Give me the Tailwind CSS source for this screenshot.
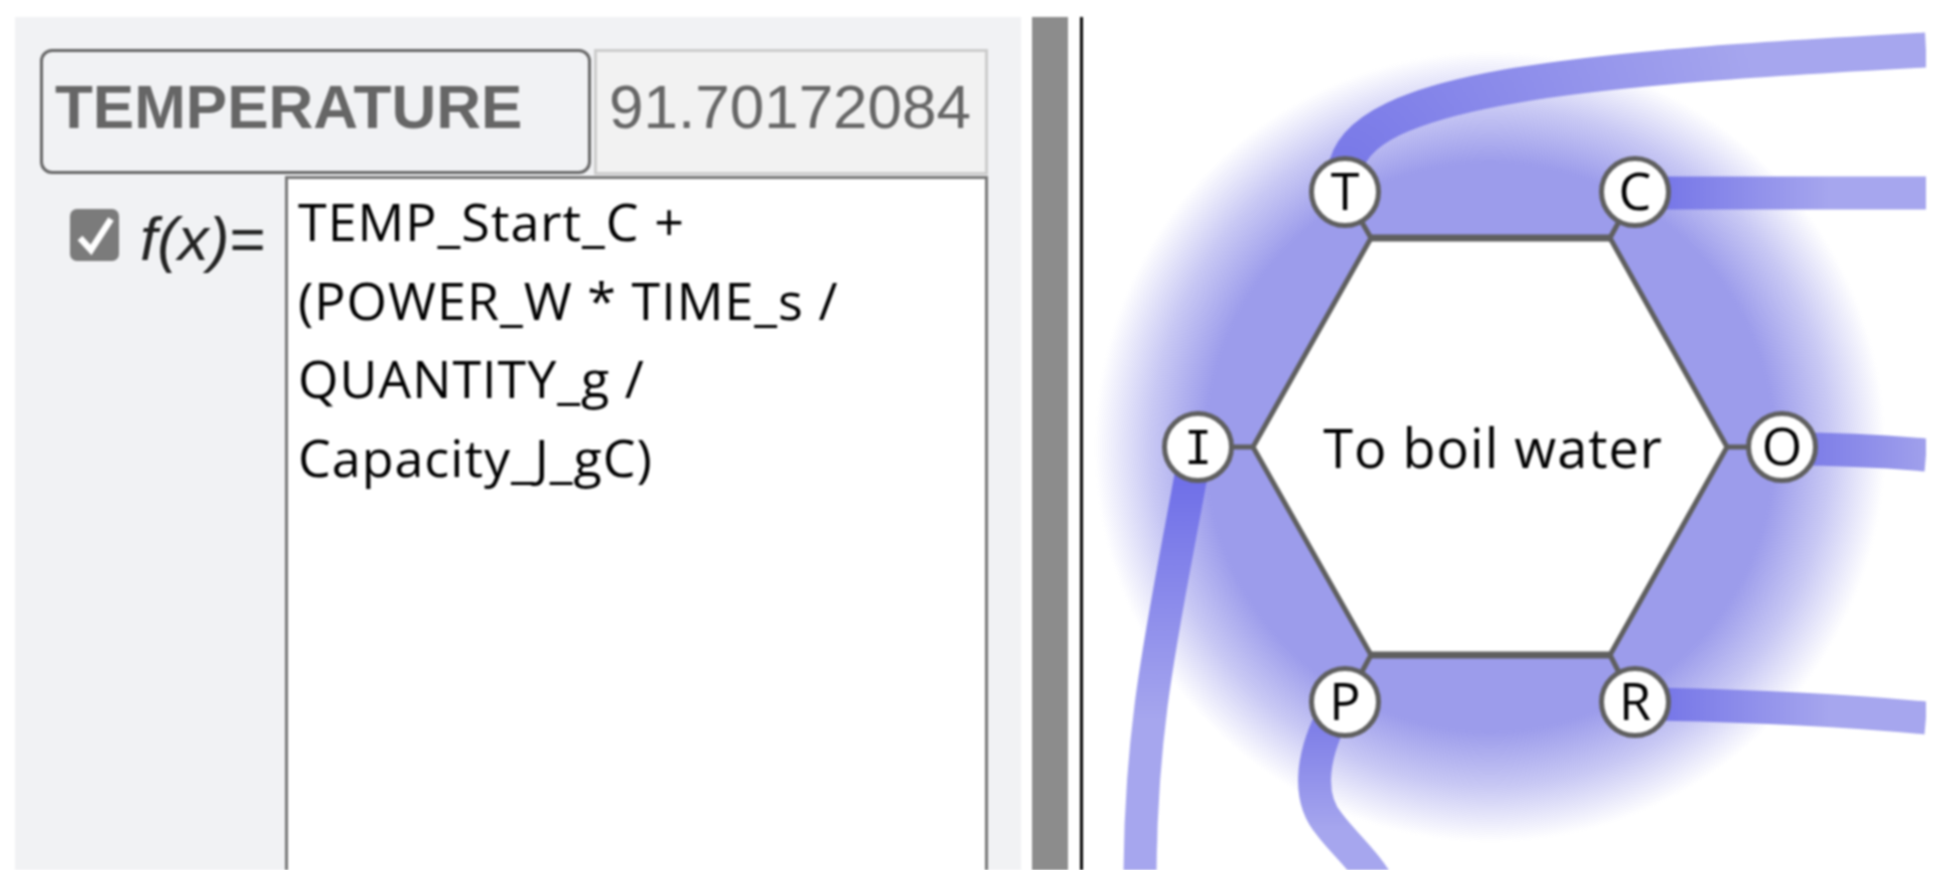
<!DOCTYPE html>
<html lang="en">
<head>
  <meta charset="UTF-8">
  <meta name="viewport" content="width=device-width, initial-scale=1.0">
  <title>To boil water</title>
  <script src="https://cdn.jsdelivr.net/npm/@tailwindcss/browser@4"></script>
</head>
<body class="bg-white overflow-hidden">
  <div class="flex h-[853px] w-[1911px] mt-[17px] ml-[15px] blur-[1px]">

    <!-- variable panel -->
    <div class="flex flex-col w-[1006px] shrink-0 bg-[#f1f2f4] pt-[32px] pl-[25px] pr-[33px]">
      <div class="flex h-[126px] gap-[3px] shrink-0">
        <div class="w-[551px] h-[125px] border-[3px] border-[#666] rounded-[12px] pl-[12px] pt-[20px] text-[62px] leading-[70px] font-bold text-[#666] font-['Liberation_Sans',sans-serif]">TEMPERATURE</div>
        <div class="w-[394px] h-[126px] border-[3px] border-[#ccc] bg-[#f2f2f2] pl-[12px] pt-[20px] text-[62px] leading-[70px] text-[#666] font-['Liberation_Sans',sans-serif]">91.70172084</div>
      </div>
      <div class="flex flex-1 min-h-0 mt-[1px]">
        <div class="flex w-[245px] shrink-0 pt-[33px] pl-[30px]">
          <svg class="w-[49px] h-[52px] shrink-0" viewBox="0 0 49 52">
            <rect width="49" height="52" rx="7" fill="#7b7b7b"/>
            <path d="M10 29L21 41L41 10" fill="none" stroke="#fff" stroke-width="6.5"/>
          </svg>
          <div class="ml-[21px] -mt-[4px] text-[62px] leading-[68px] italic text-[#222] font-['Liberation_Sans',sans-serif] whitespace-nowrap">f(x)<span class="not-italic">=</span></div>
        </div>
        <div class="flex-1 bg-white border-x-[3px] border-t-[3px] border-[#777] pl-[10px] pt-[3px] text-[52px] tracking-[1px] leading-[78.5px] text-black font-['Open_Sans',sans-serif] whitespace-nowrap">TEMP_Start_C +<br>(POWER_W * TIME_s /<br>QUANTITY_g /<br>Capacity_J_gC)</div>
      </div>
    </div>

    <div class="w-[11px] shrink-0"></div>
    <div class="w-[36px] shrink-0 bg-[#8c8c8c]"></div>
    <div class="w-[12px] shrink-0"></div>
    <div class="w-[3px] shrink-0 bg-black"></div>

    <!-- process diagram, coordinates are offset by the canvas origin -->
    <svg class="w-[843px] h-[853px] shrink-0" viewBox="1083 17 843 853" font-family="'Open Sans',sans-serif" fill="#000">
      <defs>
        <radialGradient id="halo" gradientUnits="userSpaceOnUse" cx="1490" cy="447" r="395">
          <stop offset="0" stop-color="#9c9ceb"/>
          <stop offset="0.72" stop-color="#9c9ceb"/>
          <stop offset="0.86" stop-color="#9c9ceb" stop-opacity="0.55"/>
          <stop offset="1" stop-color="#9c9ceb" stop-opacity="0"/>
        </radialGradient>
        <radialGradient id="tPipe" gradientUnits="userSpaceOnUse" cx="1345" cy="170" r="420">
          <stop offset="0" stop-color="#7878e8"/>
          <stop offset="1" stop-color="#a6a6ee"/>
        </radialGradient>
        <linearGradient id="cPipe" gradientUnits="userSpaceOnUse" x1="1670" y1="0" x2="1830" y2="0">
          <stop offset="0" stop-color="#7878e8"/>
          <stop offset="1" stop-color="#a6a6ee"/>
        </linearGradient>
        <linearGradient id="oPipe" gradientUnits="userSpaceOnUse" x1="1815" y1="0" x2="1926" y2="0">
          <stop offset="0" stop-color="#7e7ee8"/>
          <stop offset="1" stop-color="#a0a0ec"/>
        </linearGradient>
        <linearGradient id="iPipe" gradientUnits="userSpaceOnUse" x1="0" y1="483" x2="0" y2="720">
          <stop offset="0" stop-color="#7070e8"/>
          <stop offset="1" stop-color="#a6a6ee"/>
        </linearGradient>
        <linearGradient id="pPipe" gradientUnits="userSpaceOnUse" x1="0" y1="730" x2="0" y2="830">
          <stop offset="0" stop-color="#8080e8"/>
          <stop offset="1" stop-color="#a6a6ee"/>
        </linearGradient>
      </defs>

      <circle cx="1490" cy="447" r="395" fill="url(#halo)"/>

      <g fill="none" stroke-width="33">
        <path d="M1345 172C1355 85 1600 68 1926 50" stroke="url(#tPipe)" stroke-width="35"/>
        <path d="M1650 193H1926" stroke="url(#cPipe)"/>
        <path d="M1790 449C1840 449 1880 451 1926 455" stroke="url(#oPipe)"/>
        <path d="M1650 704C1760 706 1840 710 1926 718" stroke="url(#cPipe)"/>
        <path d="M1192 470C1165 620 1140 720 1140 880" stroke="url(#iPipe)"/>
        <path d="M1333 715C1310 760 1308 800 1330 825C1345 845 1365 860 1385 895" stroke="url(#pPipe)"/>
      </g>

      <path d="M1371 238H1610L1727 447L1610 655H1371L1253 447Z" fill="#fff" stroke="#5f5f5f" stroke-width="5"/>
      <path d="M1371 238H1610M1371 655H1610" fill="none" stroke="#5f5f5f" stroke-width="7"/>
      <g stroke="#5f5f5f" stroke-width="5">
        <path d="M1371 238L1352 205M1610 238L1628 205M1253 447H1232M1727 447H1748M1371 655L1352 690M1610 655L1628 690"/>
      </g>

      <text x="1493" y="468" text-anchor="middle" font-size="54" letter-spacing="1">To boil water</text>

      <g fill="#fff" stroke="#5f5f5f" stroke-width="5">
        <circle cx="1345" cy="192" r="33.5"/>
        <circle cx="1635" cy="192" r="33.5"/>
        <circle cx="1198" cy="447" r="33.5"/>
        <circle cx="1782" cy="447" r="33.5"/>
        <circle cx="1345" cy="702" r="33.5"/>
        <circle cx="1635" cy="702" r="33.5"/>
      </g>
      <g text-anchor="middle" font-size="52">
        <text x="1345" y="210">T</text>
        <text x="1635" y="210">C</text>
        <text x="1198" y="464" font-family="'DejaVu Sans Mono',monospace" font-size="46">I</text>
        <text x="1782" y="465">O</text>
        <text x="1345" y="720">P</text>
        <text x="1635" y="720">R</text>
      </g>
    </svg>
  </div>
</body>
</html>
